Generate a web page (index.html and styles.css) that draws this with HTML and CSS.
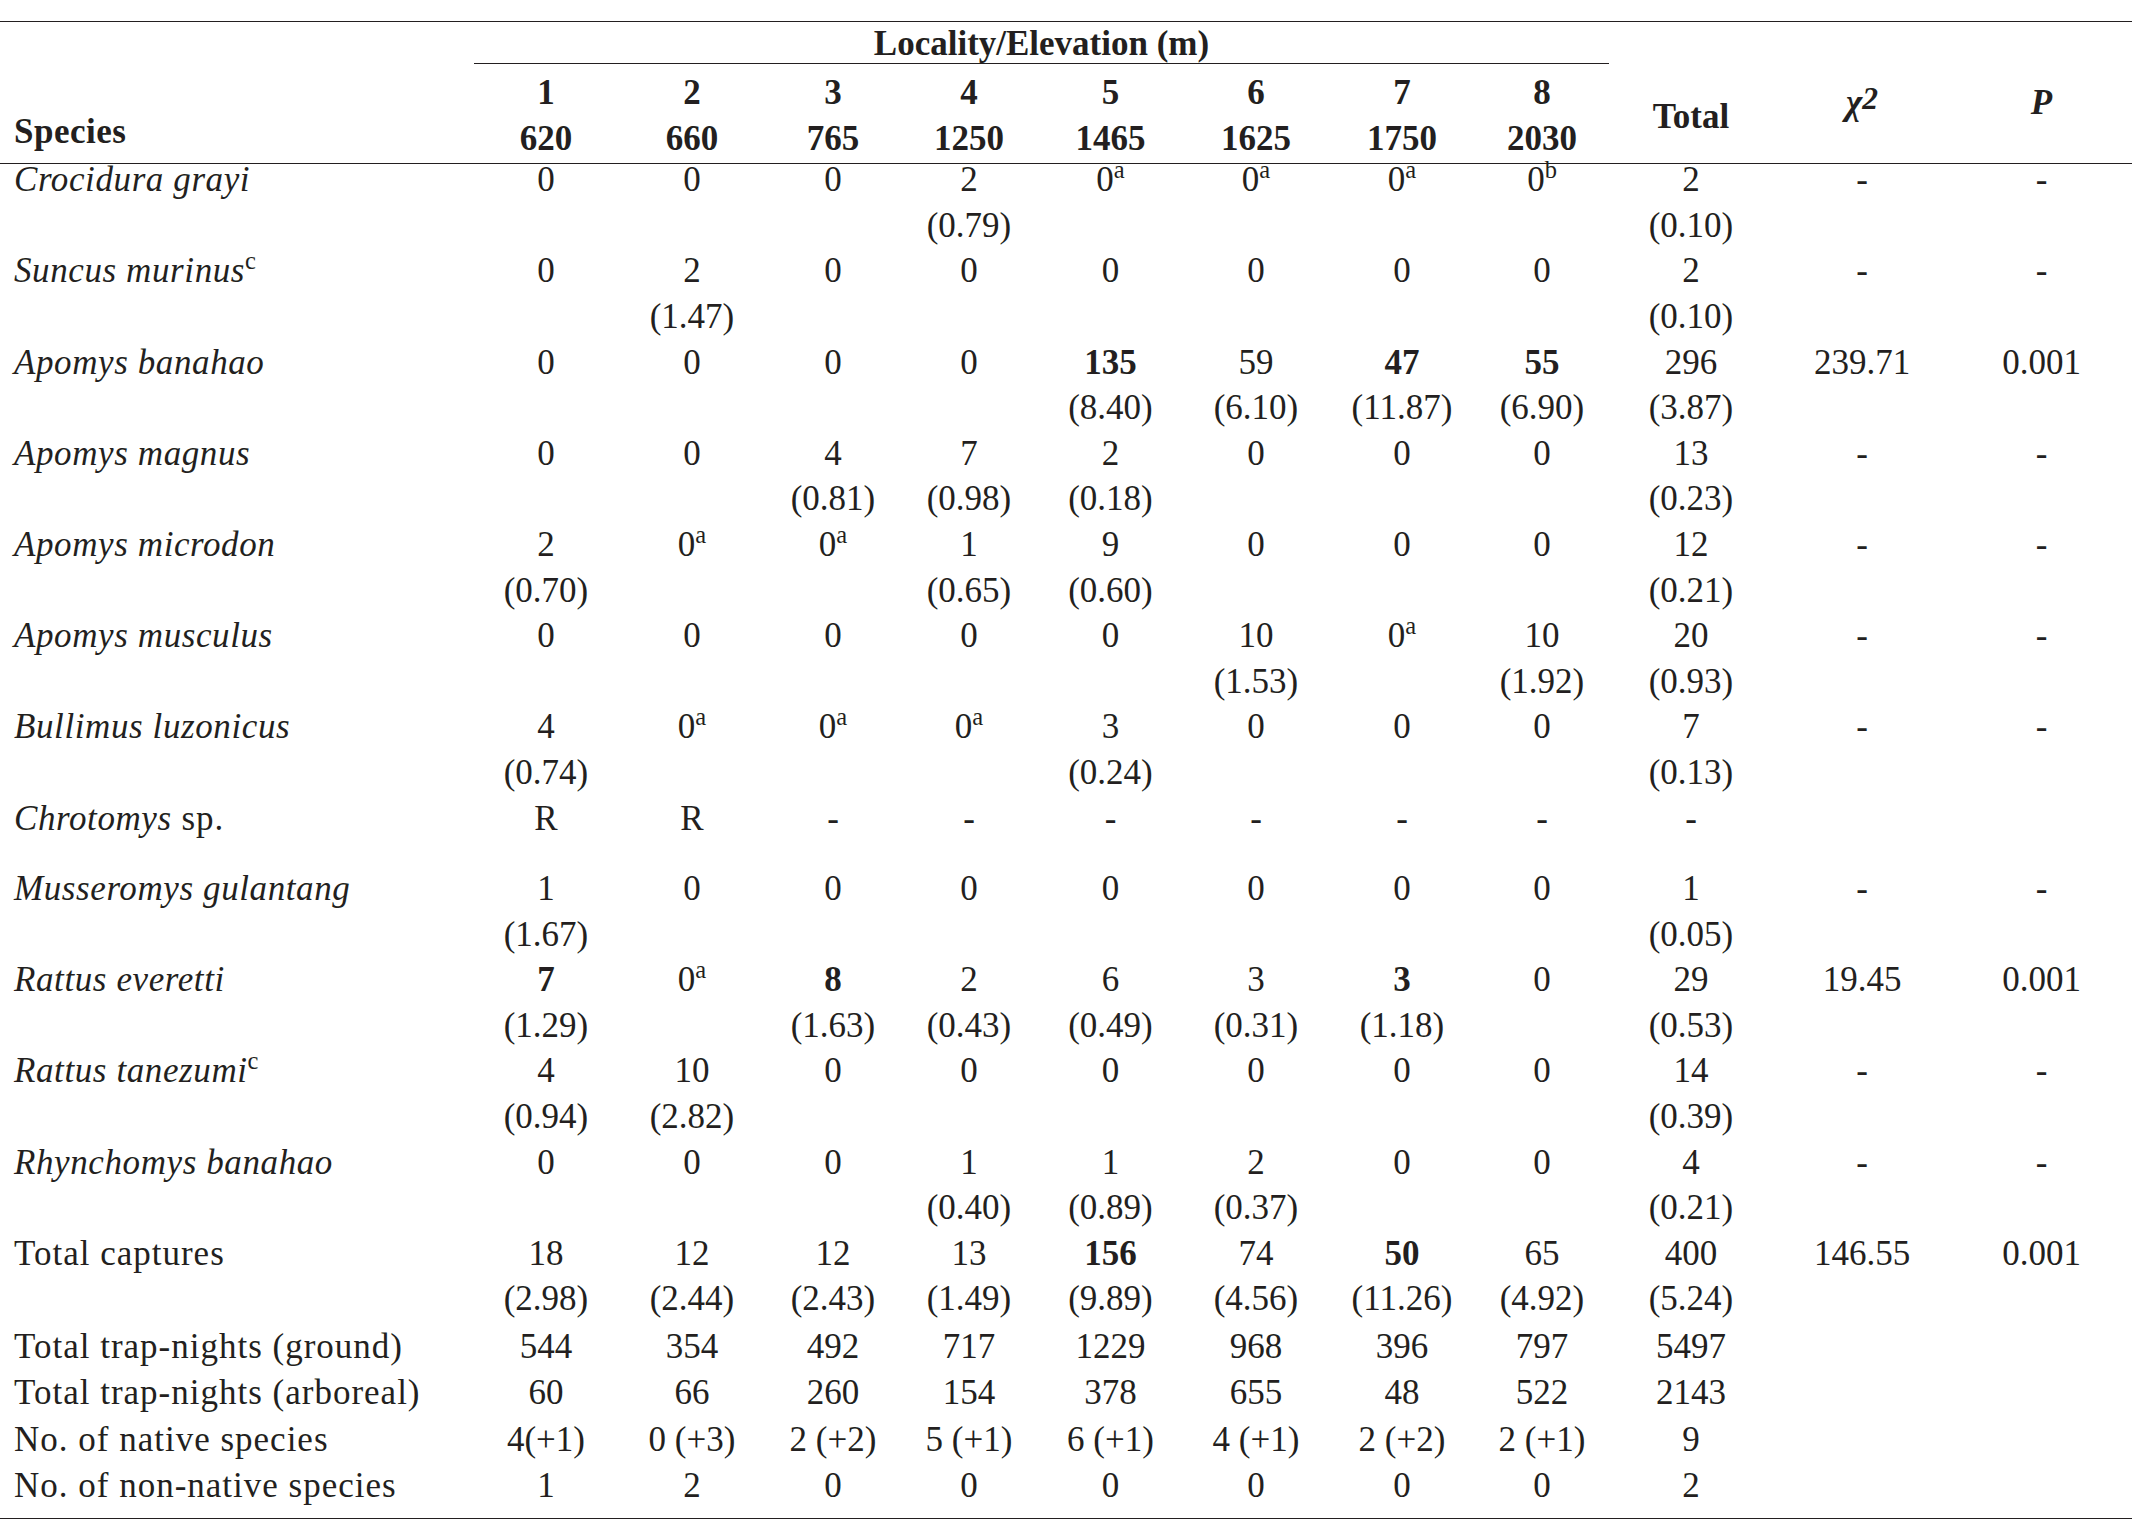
FILE: index.html
```html
<!DOCTYPE html>
<html lang="en">
<head>
<meta charset="utf-8">
<title>Captures by locality and elevation</title>
<link rel="stylesheet" href="styles.css">
</head>
<body>
<table class="data">
  <colgroup>
    <col class="w-sp"><col class="w1"><col class="w2"><col class="w3"><col class="w4"><col class="w5"><col class="w6"><col class="w7"><col class="w8"><col class="wt"><col class="wc"><col class="wp">
  </colgroup>
  <thead>
    <tr class="h1">
      <th rowspan="2" class="sp">Species</th>
      <th colspan="8" class="loc">Locality/Elevation (m)</th>
      <th rowspan="2" class="tot">Total</th>
      <th rowspan="2" class="stat"><i>χ<span class="two">2</span></i></th>
      <th rowspan="2" class="stat"><i>P</i></th>
    </tr>
    <tr class="h2">
      <th>1<br>620</th><th>2<br>660</th><th>3<br>765</th><th>4<br>1250</th><th>5<br>1465</th><th>6<br>1625</th><th>7<br>1750</th><th>8<br>2030</th>
    </tr>
  </thead>
  <tbody>
    <tr><td class="sp"><i>Crocidura grayi</i></td><td>0</td><td>0</td><td>0</td><td>2<br>(0.79)</td><td>0<sup>a</sup></td><td>0<sup>a</sup></td><td>0<sup>a</sup></td><td>0<sup>b</sup></td><td>2<br>(0.10)</td><td>-</td><td>-</td></tr>
    <tr><td class="sp"><i>Suncus murinus</i><sup>c</sup></td><td>0</td><td>2<br>(1.47)</td><td>0</td><td>0</td><td>0</td><td>0</td><td>0</td><td>0</td><td>2<br>(0.10)</td><td>-</td><td>-</td></tr>
    <tr><td class="sp"><i>Apomys banahao</i></td><td>0</td><td>0</td><td>0</td><td>0</td><td><b>135</b><br>(8.40)</td><td>59<br>(6.10)</td><td><b>47</b><br>(11.87)</td><td><b>55</b><br>(6.90)</td><td>296<br>(3.87)</td><td>239.71</td><td>0.001</td></tr>
    <tr><td class="sp"><i>Apomys magnus</i></td><td>0</td><td>0</td><td>4<br>(0.81)</td><td>7<br>(0.98)</td><td>2<br>(0.18)</td><td>0</td><td>0</td><td>0</td><td>13<br>(0.23)</td><td>-</td><td>-</td></tr>
    <tr><td class="sp"><i>Apomys microdon</i></td><td>2<br>(0.70)</td><td>0<sup>a</sup></td><td>0<sup>a</sup></td><td>1<br>(0.65)</td><td>9<br>(0.60)</td><td>0</td><td>0</td><td>0</td><td>12<br>(0.21)</td><td>-</td><td>-</td></tr>
    <tr><td class="sp"><i>Apomys musculus</i></td><td>0</td><td>0</td><td>0</td><td>0</td><td>0</td><td>10<br>(1.53)</td><td>0<sup>a</sup></td><td>10<br>(1.92)</td><td>20<br>(0.93)</td><td>-</td><td>-</td></tr>
    <tr><td class="sp"><i>Bullimus luzonicus</i></td><td>4<br>(0.74)</td><td>0<sup>a</sup></td><td>0<sup>a</sup></td><td>0<sup>a</sup></td><td>3<br>(0.24)</td><td>0</td><td>0</td><td>0</td><td>7<br>(0.13)</td><td>-</td><td>-</td></tr>
    <tr class="mid"><td class="sp"><i>Chrotomys</i> sp.</td><td>R</td><td>R</td><td>-</td><td>-</td><td>-</td><td>-</td><td>-</td><td>-</td><td>-</td><td></td><td></td></tr>
    <tr><td class="sp"><i>Musseromys gulantang</i></td><td>1<br>(1.67)</td><td>0</td><td>0</td><td>0</td><td>0</td><td>0</td><td>0</td><td>0</td><td>1<br>(0.05)</td><td>-</td><td>-</td></tr>
    <tr><td class="sp"><i>Rattus everetti</i></td><td><b>7</b><br>(1.29)</td><td>0<sup>a</sup></td><td><b>8</b><br>(1.63)</td><td>2<br>(0.43)</td><td>6<br>(0.49)</td><td>3<br>(0.31)</td><td><b>3</b><br>(1.18)</td><td>0</td><td>29<br>(0.53)</td><td>19.45</td><td>0.001</td></tr>
    <tr><td class="sp"><i>Rattus tanezumi</i><sup>c</sup></td><td>4<br>(0.94)</td><td>10<br>(2.82)</td><td>0</td><td>0</td><td>0</td><td>0</td><td>0</td><td>0</td><td>14<br>(0.39)</td><td>-</td><td>-</td></tr>
    <tr><td class="sp"><i>Rhynchomys banahao</i></td><td>0</td><td>0</td><td>0</td><td>1<br>(0.40)</td><td>1<br>(0.89)</td><td>2<br>(0.37)</td><td>0</td><td>0</td><td>4<br>(0.21)</td><td>-</td><td>-</td></tr>
    <tr class="captures"><td class="sp">Total captures</td><td>18<br>(2.98)</td><td>12<br>(2.44)</td><td>12<br>(2.43)</td><td>13<br>(1.49)</td><td><b>156</b><br>(9.89)</td><td>74<br>(4.56)</td><td><b>50</b><br>(11.26)</td><td>65<br>(4.92)</td><td>400<br>(5.24)</td><td>146.55</td><td>0.001</td></tr>
    <tr class="single"><td class="sp">Total trap-nights (ground)</td><td>544</td><td>354</td><td>492</td><td>717</td><td>1229</td><td>968</td><td>396</td><td>797</td><td>5497</td><td></td><td></td></tr>
    <tr class="single"><td class="sp">Total trap-nights (arboreal)</td><td>60</td><td>66</td><td>260</td><td>154</td><td>378</td><td>655</td><td>48</td><td>522</td><td>2143</td><td></td><td></td></tr>
    <tr class="single"><td class="sp">No. of native species</td><td>4(+1)</td><td>0 (+3)</td><td>2 (+2)</td><td>5 (+1)</td><td>6 (+1)</td><td>4 (+1)</td><td>2 (+2)</td><td>2 (+1)</td><td>9</td><td></td><td></td></tr>
    <tr class="single last"><td class="sp">No. of non-native species</td><td>1</td><td>2</td><td>0</td><td>0</td><td>0</td><td>0</td><td>0</td><td>0</td><td>2</td><td></td><td></td></tr>
  </tbody>
</table>
</body>
</html>
```

FILE: styles.css
```css
html, body {
  margin: 0;
  padding: 0;
  background: #ffffff;
}

body {
  color: #231f20;
  font-family: "Liberation Serif", "Times New Roman", serif;
  font-size: 35px;
}

.data {
  margin-top: 21px;
  width: 2132px;
  table-layout: fixed;
  border-collapse: collapse;
  border-top: 1px solid #231f20;
  border-bottom: 1px solid #231f20;
}

.w-sp { width: 474px; }
.w1 { width: 144px; }
.w2 { width: 148px; }
.w3 { width: 134px; }
.w4 { width: 138px; }
.w5 { width: 145px; }
.w6 { width: 146px; }
.w7 { width: 146px; }
.w8 { width: 134px; }
.wt { width: 164px; }
.wc { width: 178px; }
.wp { width: 181px; }

th, td {
  padding: 0;
  text-align: center;
  vertical-align: top;
  white-space: nowrap;
  line-height: 45.6px;
}

th {
  font-weight: bold;
}

thead {
  border-bottom: 1px solid #231f20;
}

.h1 .loc {
  padding-top: 2px;
  line-height: 39px;
  border-bottom: 1px solid #231f20;
}

.h2 th {
  padding: 6px 0 2px;
}

th.sp {
  text-align: left;
  vertical-align: bottom;
  padding: 0 0 9px 14px;
  letter-spacing: 0.5px;
}

th.tot {
  vertical-align: bottom;
  padding-bottom: 24px;
}

th.stat {
  vertical-align: bottom;
  padding-bottom: 38px;
}

.two {
  font-size: 0.9em;
  vertical-align: 0.15em;
  line-height: 0;
}

tbody td {
  padding-bottom: 7px;
}

tbody td::before {
  content: "";
  display: block;
  margin-top: -7px;
}

td.sp {
  text-align: left;
  padding-left: 14px;
  letter-spacing: 1px;
}

td.sp i {
  letter-spacing: 0.6px;
}

sup {
  font-size: 0.7em;
  line-height: 0;
  vertical-align: 0.52em;
  font-style: normal;
  letter-spacing: 0;
}

tr.mid td {
  padding-bottom: 32px;
}

tr.captures td {
  padding-bottom: 9px;
}

tr.single td {
  line-height: 46.3px;
}

tr.last td {
  padding-bottom: 9px;
}
```
